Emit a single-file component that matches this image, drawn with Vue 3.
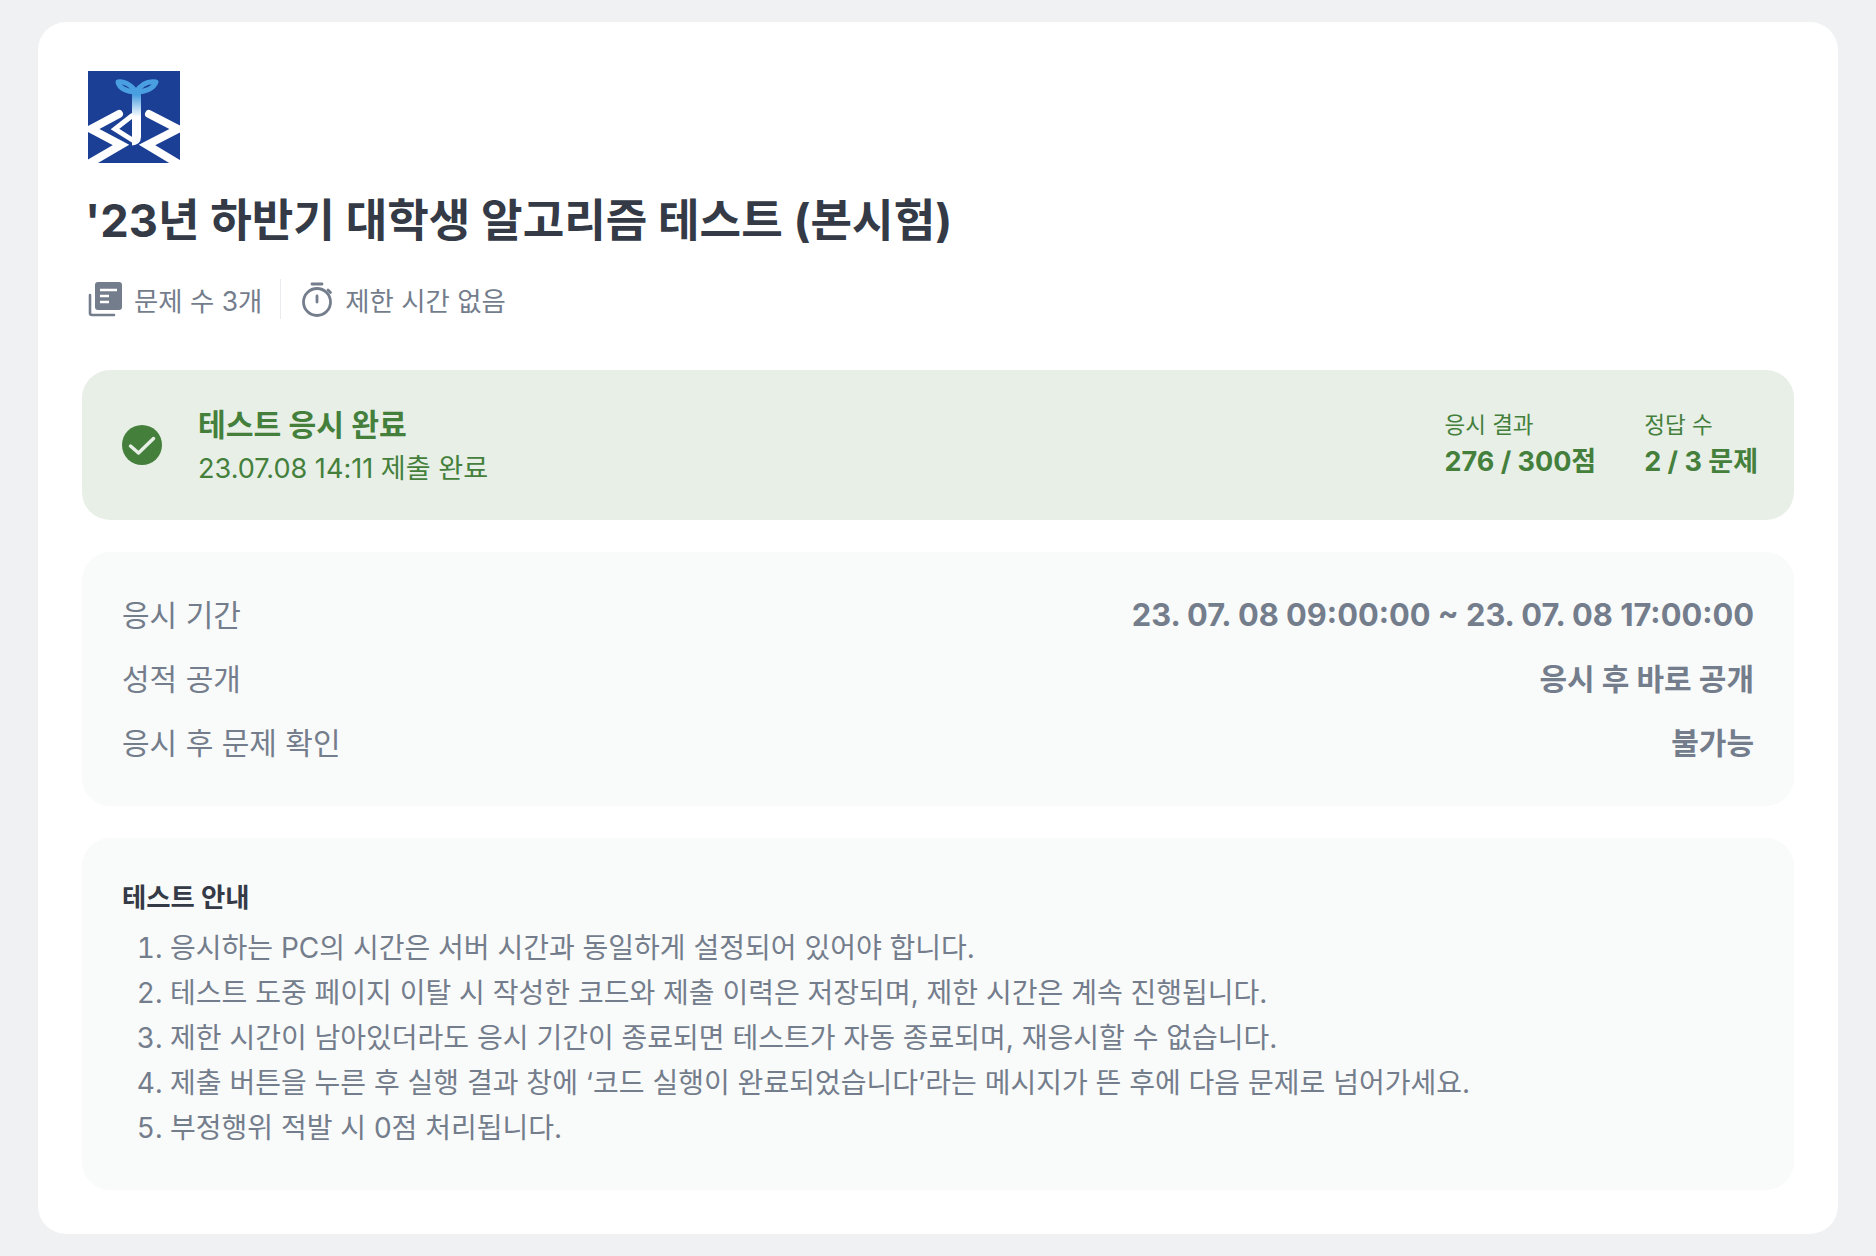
<script setup>
const stats = [
  { label: '응시 결과', value: '276 / 300점' },
  { label: '정답 수', value: '2 / 3 문제' },
]
const infos = [
  { label: '응시 기간', value: '23. 07. 08 09:00:00 ~ 23. 07. 08 17:00:00' },
  { label: '성적 공개', value: '응시 후 바로 공개' },
  { label: '응시 후 문제 확인', value: '불가능' },
]
const notes = [
  '응시하는 PC의 시간은 서버 시간과 동일하게 설정되어 있어야 합니다.',
  '테스트 도중 페이지 이탈 시 작성한 코드와 제출 이력은 저장되며, 제한 시간은 계속 진행됩니다.',
  '제한 시간이 남아있더라도 응시 기간이 종료되면 테스트가 자동 종료되며, 재응시할 수 없습니다.',
  '제출 버튼을 누른 후 실행 결과 창에 ‘코드 실행이 완료되었습니다’라는 메시지가 뜬 후에 다음 문제로 넘어가세요.',
  '부정행위 적발 시 0점 처리됩니다.',
]
</script>

<template>
  <div class="page">
    <main class="card">
      <header class="head">
        <svg class="logo" viewBox="0 0 92 92" width="92" height="92">
          <defs>
            <linearGradient id="stem" gradientUnits="userSpaceOnUse" x1="0" y1="24" x2="0" y2="46">
              <stop offset="0" stop-color="#4a9fe0" />
              <stop offset="1" stop-color="#ffffff" />
            </linearGradient>
          </defs>
          <rect width="92" height="92" fill="#1b3f94" />
          <path d="M48 21C42 12 34 10 30 11C31 17 39 21 48 21C58 21 66 17 68 11C62 10 54 12 48 21Z" fill="none" stroke="#4a9fe0" stroke-width="5" stroke-linejoin="round" />
          <path d="M48.5 20V66Q48.5 70 44 70" stroke="url(#stem)" stroke-width="9" fill="none" />
          <path d="M31 43L3 58L33 74L2 92" fill="none" stroke="#fff" stroke-width="8" stroke-linecap="round" stroke-linejoin="miter" />
          <path d="M61 43L90 58L59 74L89 92" fill="none" stroke="#fff" stroke-width="8" stroke-linecap="round" stroke-linejoin="miter" />
          <path d="M45 44L27 58L46 70" fill="none" stroke="#fff" stroke-width="5" />
        </svg>
        <h1 class="title">'23년 하반기 대학생 알고리즘 테스트 (본시험)</h1>
        <div class="meta">
          <span class="meta-item">
            <svg width="36" height="36" viewBox="0 0 36 36">
              <path d="M2 14v18a2 2 0 0 0 2 2h22" fill="none" stroke="#747d8c" stroke-width="2.6" stroke-linecap="round" />
              <rect x="7" y="1" width="27" height="28" rx="3" fill="#747d8c" />
              <path d="M12 9h17M12 15h9M12 21h9" stroke="#fff" stroke-width="2.6" />
            </svg>
            문제 수 3개
          </span>
          <i class="divider"></i>
          <span class="meta-item">
            <svg width="36" height="36" viewBox="0 0 36 36" fill="none" stroke="#747d8c" stroke-width="2.8">
              <circle cx="18" cy="21" r="13.5" />
              <path d="M13 3h10M18 15v6M29 9l2.5 2.5" stroke-linecap="round" />
            </svg>
            제한 시간 없음
          </span>
        </div>
      </header>

      <section class="status">
        <div class="status-main">
          <svg width="40" height="40" viewBox="0 0 40 40">
            <circle cx="20" cy="20" r="20" fill="#44803c" />
            <path d="M8.5 21L16.5 28L31.5 13.5" fill="none" stroke="#e8efe7" stroke-width="3.4" stroke-linecap="round" stroke-linejoin="round" />
          </svg>
          <div class="status-text">
            <div class="status-title">테스트 응시 완료</div>
            <div class="status-sub">23.07.08 14:11 제출 완료</div>
          </div>
        </div>
        <div class="stats">
          <div v-for="s in stats" :key="s.label">
            <div class="stat-label">{{ s.label }}</div>
            <div class="stat-value">{{ s.value }}</div>
          </div>
        </div>
      </section>

      <section class="panel infos">
        <div v-for="row in infos" :key="row.label" class="info-row">
          <span>{{ row.label }}</span>
          <strong>{{ row.value }}</strong>
        </div>
      </section>

      <section class="panel guide">
        <h2>테스트 안내</h2>
        <ol>
          <li v-for="n in notes" :key="n">{{ n }}</li>
        </ol>
      </section>
    </main>
  </div>
</template>

<style>
html, body { margin: 0; background: #f0f1f3; }
</style>

<style scoped>
.page {
  box-sizing: border-box;
  height: 1256px;
  padding: 22px 38px;
  font-family: Inter, "Noto Sans CJK KR", sans-serif;
  overflow: hidden;
}
.card {
  box-sizing: border-box;
  height: 1212px;
  background: #fff;
  border-radius: 28px;
  padding: 49px 44px 44px;
}
.head { padding-left: 6px; }
.logo { display: block; }
.title {
  margin: 31px 0 0 -3px;
  font-size: 45.2px;
  line-height: 54px;
  font-weight: 700;
  color: #343a46;
}
.meta {
  display: flex;
  align-items: center;
  margin-top: 31px;
  height: 40px;
  color: #747d8c;
  font-size: 26.4px;
}
.meta-item { display: flex; align-items: center; gap: 10px; }
.divider { width: 1px; height: 40px; background: #e9ebee; margin: 0 18px; }
.status {
  display: flex;
  justify-content: space-between;
  align-items: center;
  height: 150px;
  margin-top: 51px;
  padding: 0 36px 0 40px;
  box-sizing: border-box;
  background: #e8efe7;
  border-radius: 28px;
  color: #44803c;
}
.status-main { display: flex; align-items: center; gap: 36px; }
.status-text { padding-top: 3px; }
.status-title { font-size: 30.2px; line-height: 36px; font-weight: 700; }
.status-sub { font-size: 27.1px; line-height: 36px; margin-top: 8px; }
.stats { display: flex; gap: 48px; }
.stat-label { font-size: 22.5px; line-height: 28px; }
.stat-value { font-size: 27px; line-height: 36px; font-weight: 700; margin-top: 5px; }
.panel { background: #f9fafa; border-radius: 28px; }
.infos { margin-top: 32px; padding: 31px 40px; height: 254px; box-sizing: border-box; color: #747d8c; }
.info-row {
  display: flex;
  justify-content: space-between;
  font-size: 30px;
  line-height: 64px;
  height: 64px;
}
.info-row strong { font-weight: 700; }
.info-row:first-child strong { font-size: 30.8px; }
.guide { margin-top: 32px; padding: 40px; height: 352px; box-sizing: border-box; }
.guide h2 { margin: 0; font-size: 26.4px; line-height: 38px; font-weight: 700; color: #343a46; }
ol { margin: 10px 0 0; padding-left: 48px; color: #747d8c; font-size: 28px; line-height: 45px; }
</style>
